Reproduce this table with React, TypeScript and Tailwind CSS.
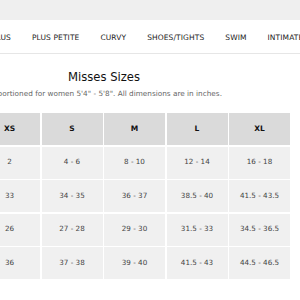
const navItems = ["PLUS", "PLUS PETITE", "CURVY", "SHOES/TIGHTS", "SWIM", "INTIMATES"];

const sizes = ["XS", "S", "M", "L", "XL"];

const rows = [
  ["2", "4 - 6", "8 - 10", "12 - 14", "16 - 18"],
  ["33", "34 - 35", "36 - 37", "38.5 - 40", "41.5 - 43.5"],
  ["26", "27 - 28", "29 - 30", "31.5 - 33", "34.5 - 36.5"],
  ["36", "37 - 38", "39 - 40", "41.5 - 43", "44.5 - 46.5"],
];

export default function App() {
  return (
    <div
      className="relative h-[300px] w-[300px] overflow-hidden bg-white"
      style={{ fontFamily: '"DejaVu Sans", sans-serif' }}
    >
      <div className="h-[20px] bg-[#efefef]" />

      <nav className="flex h-[34px] items-center border-b border-[#e6e6e6]">
        <div className="ml-[-8px] mt-[2px] flex shrink-0 gap-[21px] whitespace-nowrap text-[7.5px] tracking-[0.1px] text-[#222]">
          {navItems.map((item) => (
            <span key={item}>{item}</span>
          ))}
        </div>
      </nav>

      <div className="ml-[-96px] w-[400px] text-center">
        <h1 className="mt-[15px] text-[11.6px] leading-[16px] text-[#111]">Misses Sizes</h1>
        <p className="mt-[3px] text-[7.3px] leading-[12px] text-[#666]">
          Proportioned for women 5&apos;4&quot; - 5&apos;8&quot;. All dimensions are in inches.
        </p>
      </div>

      <div className="ml-[-21px] mt-[13px] grid w-max grid-cols-[repeat(5,61px)] gap-[1.5px]">
        {sizes.map((s) => (
          <div
            key={s}
            className="flex h-[32px] items-center justify-center bg-[#dadada] text-[7.5px] font-bold text-[#111]"
          >
            {s}
          </div>
        ))}
        {rows.map((row, i) =>
          row.map((cell, j) => (
            <div
              key={`${i}-${j}`}
              className="flex h-[32px] items-center justify-center bg-[#f0f0f0] text-[7.2px] text-[#444]"
            >
              {cell}
            </div>
          ))
        )}
      </div>
    </div>
  );
}
